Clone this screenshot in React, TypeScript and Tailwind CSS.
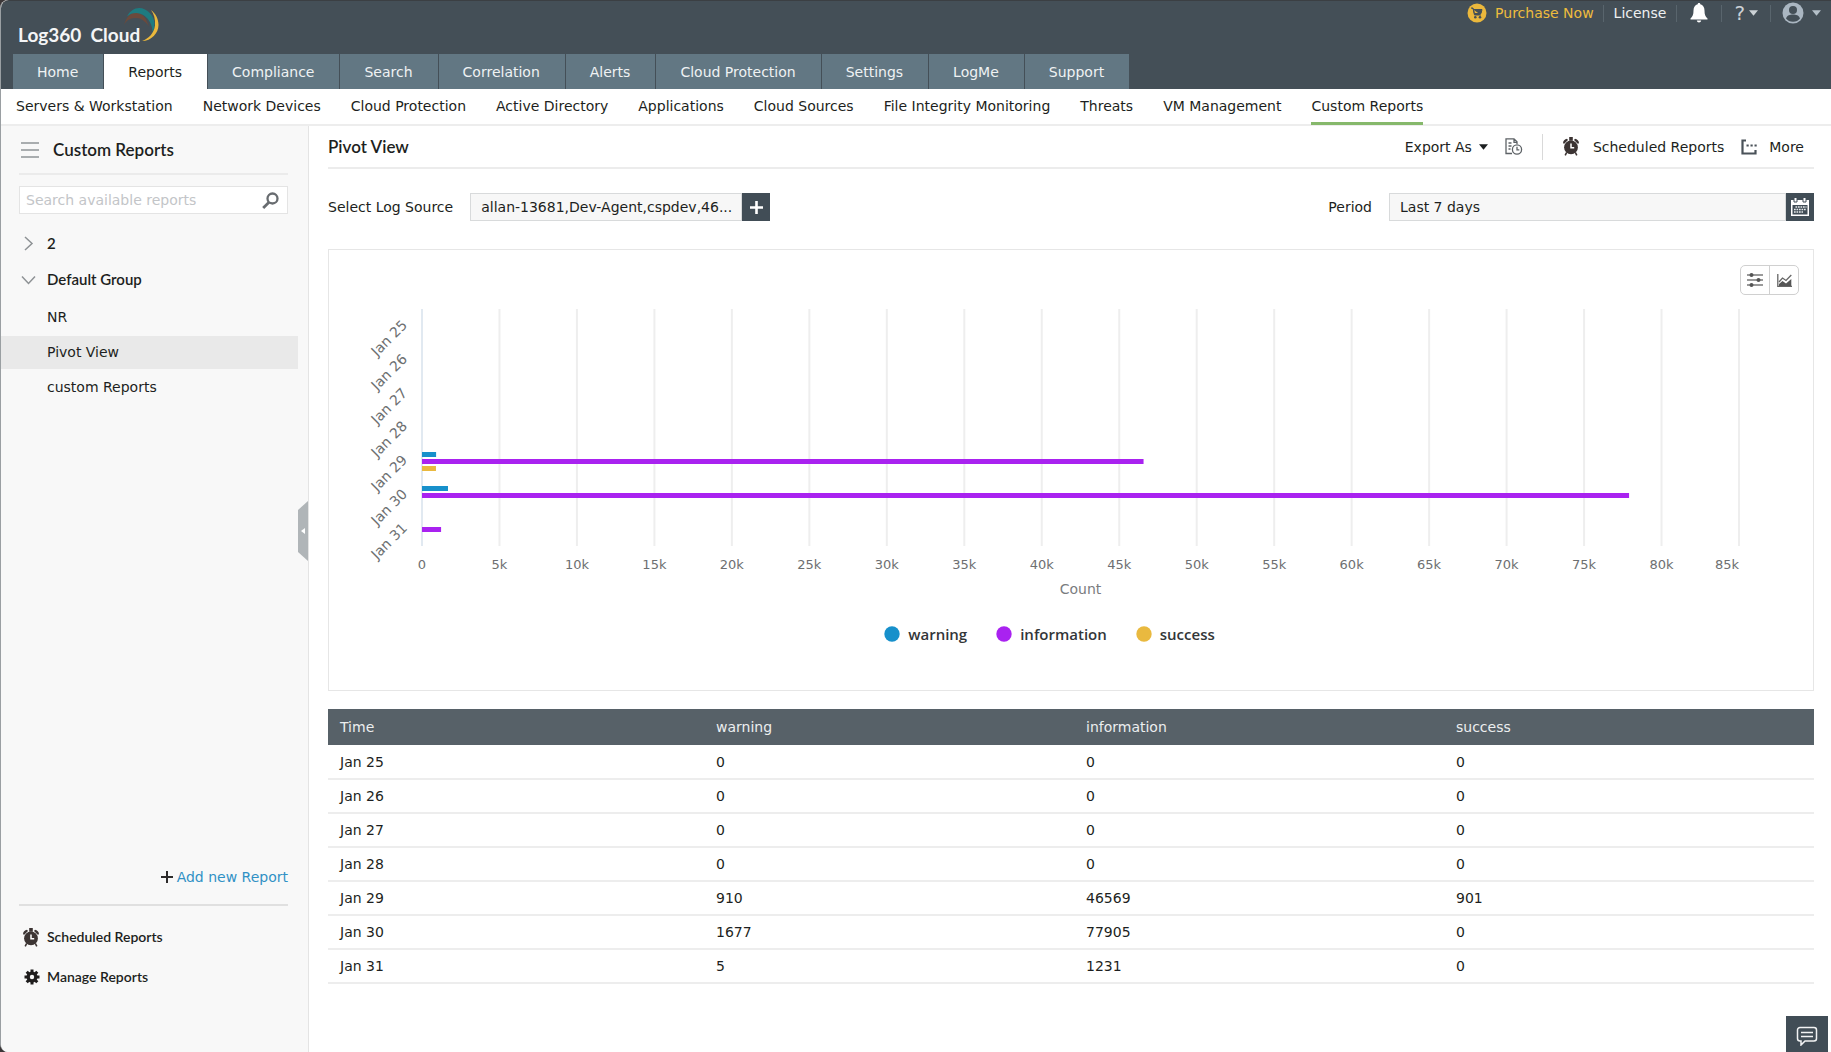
import type { ReactNode } from "react";

const TABS = [
  "Home",
  "Reports",
  "Compliance",
  "Search",
  "Correlation",
  "Alerts",
  "Cloud Protection",
  "Settings",
  "LogMe",
  "Support",
];

const SUB_TABS = [
  "Servers & Workstation",
  "Network Devices",
  "Cloud Protection",
  "Active Directory",
  "Applications",
  "Cloud Sources",
  "File Integrity Monitoring",
  "Threats",
  "VM Management",
  "Custom Reports",
];

const SERIES = [
  { key: "warning", color: "#1790cb" },
  { key: "information", color: "#a922f0" },
  { key: "success", color: "#e9b93f" },
] as const;

const ROWS = [
  { time: "Jan 25", warning: 0, information: 0, success: 0 },
  { time: "Jan 26", warning: 0, information: 0, success: 0 },
  { time: "Jan 27", warning: 0, information: 0, success: 0 },
  { time: "Jan 28", warning: 0, information: 0, success: 0 },
  { time: "Jan 29", warning: 910, information: 46569, success: 901 },
  { time: "Jan 30", warning: 1677, information: 77905, success: 0 },
  { time: "Jan 31", warning: 5, information: 1231, success: 0 },
];

const MAX = 85000;
const TICKS = Array.from({ length: 18 }, (_, i) => i * 5);
const PLOT_HEIGHT = 237;

function Caret({ className }: { className: string }) {
  return (
    <svg viewBox="0 0 10 6" className={className} fill="currentColor" aria-hidden="true">
      <path d="M0 0h10L5 6z" />
    </svg>
  );
}

function AlarmIcon() {
  return (
    <svg viewBox="0 0 18 19" className="h-[19px] w-[18px] shrink-0" aria-hidden="true">
      <path d="M1 6.2C1 4 2.800 2 5 1.800L6 3 2.200 6.800zM17 6.200C17 4 15.200 2 13 1.800L12 3l3.800 3.800z" fill="#3c3433" />
      <path d="M8 .5h2V3H8zM4.600 15.500l-1.400 2.800M13.400 15.500l1.400 2.800" fill="#3c3433" stroke="#3c3433" strokeWidth="1.600" />
      <circle cx="9" cy="10.400" r="6.900" fill="#3c3433" />
      <path d="M9 6.500v4.200h3.200" fill="none" stroke="#fff" strokeWidth="1.500" />
    </svg>
  );
}

function GearIcon() {
  return (
    <svg viewBox="0 0 16 16" className="h-4 w-4 shrink-0" aria-hidden="true">
      <g stroke="#1f1d1d" strokeWidth="3">
        <path d="M8 .5v15M.5 8h15" />
        <path d="M2.700 2.700l10.600 10.600M13.300 2.700L2.700 13.300" />
      </g>
      <circle cx="8" cy="8" r="5.500" fill="#1f1d1d" />
      <circle cx="8" cy="8" r="2.200" fill="#f8f8f8" />
    </svg>
  );
}

function Logo() {
  return (
    <a href="#" className="relative block w-fit pt-[23px] font-['Lato',sans-serif] text-[19px] leading-[22px] font-bold text-[#f4f5f6]">
      Log360&nbsp; Cloud
      <svg viewBox="0 0 36 36" className="absolute top-[6px] left-[106px] h-9 w-9" aria-hidden="true">
        <path d="M0 18C2 11 6 6 11 5.500c5 0 9 3 11 7l3 7C21 14 17 11 12.500 11 7 11 3 12.500 0 18z" fill="#6b4a3c" />
        <path d="M3 9.500C7 2 14-1 21 2.500c6 3 9.500 9 9.500 14 0 4-.5 6-2 8.500C28.500 18 25 12 20 8.500 15 5 8 5 3 9.500z" fill="#1e7b80" />
        <path d="M27 3c4 3 7.500 8 7.500 15 0 8-7 16-16.500 16 7-2.500 12-8 13-15.500C31.500 12 30 7 27 3z" fill="#eab83c" />
      </svg>
    </a>
  );
}

function Separator() {
  return <span className="h-[17px] w-px bg-[#59656d]" />;
}

function Header() {
  return (
    <header className="flex h-[89px] flex-col rounded-tl-lg border-t border-[#3b3f43] bg-[#444f57]">
      <div className="flex flex-1 items-start justify-between pr-[10px] pl-[17px]">
        <Logo />
        <div className="flex h-6 items-center text-[#eef0f1]">
          <a href="#" className="flex items-center gap-2 pr-[9px] text-[#eebc3d]">
            <svg viewBox="0 0 20 20" className="h-5 w-5" aria-hidden="true">
              <circle cx="10" cy="10" r="9.500" fill="#ebb83c" />
              <path d="M4 5h2l1.500 7h6.500M6.500 6.500H15L14 10.500H7.300z" fill="#444f57" stroke="#444f57" strokeWidth="1" />
              <circle cx="8.300" cy="14.300" r="1.300" fill="#444f57" />
              <circle cx="13" cy="14.300" r="1.300" fill="#444f57" />
            </svg>
            Purchase Now
          </a>
          <Separator />
          <a href="#" className="px-[10px]">License</a>
          <Separator />
          <button type="button" aria-label="Notifications" className="px-[13px]">
            <svg viewBox="0 0 18 20" className="h-5 w-[18px]" fill="#fff" aria-hidden="true">
              <path d="M9 0c.8 0 1.300.5 1.300 1.300C13 2 14.500 4.200 14.500 7.500c0 4 .8 6 3 8v1H.5v-1c2.200-2 3-4 3-8C3.500 4.200 5 2 7.700 1.300 7.700.5 8.200 0 9 0zM6.800 17.500h4.400c-.2 1.300-1.100 2-2.200 2s-2-.7-2.200-2z" />
            </svg>
          </button>
          <Separator />
          <button type="button" aria-label="Help" className="flex items-center gap-1 px-3 text-[#ccd2d6]">
            <span className="text-[20px] leading-6">?</span>
            <Caret className="h-[6px] w-[9px]" />
          </button>
          <Separator />
          <button type="button" aria-label="Account" className="flex items-center gap-2 pl-[11px] text-[#b4bfc8]">
            <svg viewBox="0 0 22 22" className="h-[22px] w-[22px]" aria-hidden="true">
              <circle cx="11" cy="11" r="10.500" fill="#aab6c1" />
              <circle cx="11" cy="8" r="4" fill="#444f57" />
              <path d="M4 16.500c1-3.200 4-4 7-4s6 .8 7 4c-1.500 2-4 3.300-7 3.300s-5.500-1.300-7-3.300z" fill="#444f57" />
            </svg>
            <Caret className="h-[6px] w-[9px]" />
          </button>
        </div>
      </div>
      <nav className="flex h-[35px] gap-px pl-3">
        {TABS.map((tab) => (
          <a
            key={tab}
            href="#"
            className={
              tab === "Reports"
                ? "bg-white pr-[25px] pl-6 leading-[36px]"
                : "bg-[#627783] pr-[25px] pl-6 leading-[36px] text-[#eff2f3]"
            }
          >
            {tab}
          </a>
        ))}
      </nav>
    </header>
  );
}

function SubNav() {
  return (
    <nav className="flex h-[37px] gap-[30px] border-b-2 border-[#ededed] pl-[15px]">
      {SUB_TABS.map((tab) => (
        <a
          key={tab}
          href="#"
          className={
            tab === "Custom Reports"
              ? "h-9 border-b-[3px] border-[#86b86b] leading-[35px] whitespace-nowrap"
              : "leading-[35px] whitespace-nowrap"
          }
        >
          {tab}
        </a>
      ))}
    </nav>
  );
}

function Sidebar() {
  return (
    <aside className="relative flex w-[308px] shrink-0 flex-col border-r border-[#e4e4e4] bg-[#f8f8f8]">
      <div className="mr-5 ml-[18px] flex h-[49px] items-center gap-[14px] border-b-2 border-[#ebebeb]">
        <button type="button" aria-label="Toggle menu" className="ml-[2px] flex flex-col gap-[5px]">
          <span className="h-[2px] w-[18px] bg-[#a9adaf]" />
          <span className="h-[2px] w-[18px] bg-[#a9adaf]" />
          <span className="h-[2px] w-[18px] bg-[#a9adaf]" />
        </button>
        <h2 className="font-['Lato',sans-serif] text-[17px] leading-6 font-semibold">Custom Reports</h2>
      </div>
      <div className="mt-[11px] mr-5 ml-[18px] flex h-7 items-center border border-[#e4e4e4] bg-white pr-2 pl-[6px]">
        <input
          type="search"
          aria-label="Search available reports"
          placeholder="Search available reports"
          className="min-w-0 flex-1 outline-none placeholder:text-[#c3c5c8]"
        />
        <button type="button" aria-label="Search">
          <svg viewBox="0 0 17 17" className="h-[17px] w-[17px]" fill="none" stroke="#686c70" aria-hidden="true">
            <circle cx="10.500" cy="6.500" r="5" strokeWidth="2.300" />
            <path d="M7 10.300L1.200 16" strokeWidth="2.800" />
          </svg>
        </button>
      </div>

      <button type="button" className="mt-[11px] flex h-9 items-center gap-[11px] pl-5 font-['Lato',sans-serif] text-[15px] font-semibold">
        <svg viewBox="0 0 15 15" className="h-[15px] w-[15px]" fill="none" stroke="#8e9295" strokeWidth="1.500" aria-hidden="true">
          <path d="M4 1l7 6.500L4 14" />
        </svg>
        2
      </button>
      <button type="button" className="flex h-9 items-center gap-[11px] pl-5 font-['Lato',sans-serif] text-[15px] font-semibold">
        <svg viewBox="0 0 15 15" className="h-[15px] w-[15px]" fill="none" stroke="#8e9295" strokeWidth="1.500" aria-hidden="true">
          <path d="M1 4.500l6.500 7 6.500-7" />
        </svg>
        Default Group
      </button>
      <ul className="mt-1 mr-[10px]">
        {["NR", "Pivot View", "custom Reports"].map((name) => (
          <li key={name} className="mb-[2px]">
            <a
              href="#"
              className={
                name === "Pivot View"
                  ? "block bg-[#e9e9e9] pl-[46px] leading-[33px]"
                  : "block pl-[46px] leading-[33px]"
              }
            >
              {name}
            </a>
          </li>
        ))}
      </ul>

      <div className="mt-auto mr-5 ml-[18px] border-b-2 border-[#e0e0e0] pb-[17px]">
        <button type="button" className="ml-auto flex items-center gap-1 leading-5 text-[#3191c5]">
          <svg viewBox="0 0 12 12" className="h-3 w-3" stroke="#2d2b2b" strokeWidth="2" aria-hidden="true">
            <path d="M6 0v12M0 6h12" />
          </svg>
          Add new Report
        </button>
      </div>
      <div className="flex flex-col pt-[11px] pb-[55px] pl-[21px] font-['Lato',sans-serif] font-semibold">
        <a href="#" className="flex h-10 items-center gap-[7px]">
          <AlarmIcon />
          Scheduled Reports
        </a>
        <a href="#" className="flex h-10 items-center gap-[7px] pl-[2px]">
          <GearIcon />
          Manage Reports
        </a>
      </div>

      <button type="button" aria-label="Collapse sidebar" className="absolute top-[375px] right-0">
        <svg viewBox="0 0 10 60" className="h-[60px] w-[10px]" aria-hidden="true">
          <path d="M10 0v60L0 51V9z" fill="#b0b5b8" />
          <path d="M7 27v6l-4-3z" fill="#fff" />
        </svg>
      </button>
    </aside>
  );
}

function Toolbar() {
  return (
    <div className="flex h-[43px] items-center border-b-2 border-[#ececec]">
      <h1 className="font-['Lato',sans-serif] text-[17px] leading-6 font-semibold">Pivot View</h1>
      <div className="ml-auto flex items-center pr-[10px]">
        <button type="button" className="flex items-center gap-[7px]">
          Export As
          <Caret className="h-[6px] w-[9px]" />
        </button>
        <button type="button" aria-label="Export history" className="ml-[17px]">
          <svg viewBox="0 0 18 17" className="h-[17px] w-[18px]" fill="none" stroke="#5d6266" strokeWidth="1.300" aria-hidden="true">
            <path d="M7 15.500H1V.8h8l3 3V6M9 .8v3.500h3M3.500 5h3M3.500 8h3M3.500 11h2" />
            <circle cx="12" cy="11.500" r="4.600" />
            <path d="M12 8.800v3h2.300" />
          </svg>
        </button>
        <span className="mx-[19px] h-[26px] w-px bg-[#d9d9d9]" />
        <button type="button" className="flex items-center gap-[13px]">
          <AlarmIcon />
          Scheduled Reports
        </button>
        <button type="button" className="ml-[17px] flex items-center gap-[11px]">
          <svg viewBox="0 0 17 16" className="h-4 w-[17px]" fill="none" stroke="#4a5259" aria-hidden="true">
            <path d="M5 1.500H1.500v13h13V11" strokeWidth="2.200" />
            <path d="M5.500 6.500h11" strokeWidth="2.200" strokeDasharray="2.200 1.800" />
          </svg>
          More
        </button>
      </div>
    </div>
  );
}

function Filters() {
  return (
    <div className="mt-6 flex h-7 items-center">
      <label htmlFor="source">Select Log Source</label>
      <div className="ml-[17px] flex h-7 w-[300px]">
        <input
          id="source"
          readOnly
          value="allan-13681,Dev-Agent,cspdev,46..."
          className="min-w-0 flex-1 border border-[#d8dadb] bg-[#f7f7f7] pl-[10px] outline-none"
        />
        <button type="button" aria-label="Add log source" className="flex w-7 items-center justify-center bg-[#414d56]">
          <svg viewBox="0 0 13 13" className="h-[13px] w-[13px]" stroke="#fff" strokeWidth="2.600" aria-hidden="true">
            <path d="M6.500 0v13M0 6.500h13" />
          </svg>
        </button>
      </div>
      <label htmlFor="period" className="ml-auto">Period</label>
      <div className="ml-[17px] flex h-7 w-[425px]">
        <input
          id="period"
          readOnly
          value="Last 7 days"
          className="min-w-0 flex-1 border border-[#d8dadb] bg-[#f7f7f7] pl-[10px] outline-none"
        />
        <button type="button" aria-label="Pick dates" className="flex w-7 items-center justify-center bg-[#414d56]">
          <svg viewBox="0 0 20 20" className="h-5 w-5" aria-hidden="true">
            <path d="M1 3h18v16H1z" fill="#fff" />
            <path d="M2.500 8h15v9.500h-15z" fill="#414d56" />
            <path d="M4 .5h3V5H4zM13 .5h3V5h-3z" fill="#fff" stroke="#414d56" />
            <path d="M5.500 10h11M4 12.500h12M4 15h9" stroke="#e7eaec" strokeWidth="1.600" strokeDasharray="1.700 .8" />
          </svg>
        </button>
      </div>
    </div>
  );
}

function Chart() {
  const band = PLOT_HEIGHT / ROWS.length;
  return (
    <figure className="mt-[14px] pr-[74px] pl-[93px]">
      <svg
        role="img"
        aria-label="Events per day"
        className="block h-[292px] w-full overflow-visible"
      >
        {TICKS.map((tick) => (
          <line
            key={tick}
            x1={`${(tick * 100000) / MAX}%`}
            x2={`${(tick * 100000) / MAX}%`}
            y1="0"
            y2={PLOT_HEIGHT}
            stroke={tick === 0 ? "#c3d3e3" : "#eeeeee"}
            strokeWidth={tick === 0 ? 1 : 2}
          />
        ))}
        {ROWS.map((row, i) => (
          <g key={row.time}>
            {SERIES.map((s, j) => (
              <rect
                key={s.key}
                y={Math.round(band * (i + 0.5)) + (j - 1) * 7 - 2}
                width={row[s.key] < 100 ? 0 : `${(row[s.key] * 100) / MAX}%`}
                height="5"
                fill={s.color}
              />
            ))}
            <text
              transform={`translate(-14 ${Math.round(band * (i + 0.5))}) rotate(-45)`}
              textAnchor="end"
              fontSize="14"
              fill="#6d6f71"
            >
              {row.time}
            </text>
          </g>
        ))}
        {TICKS.map((tick, i) => (
          <text
            key={tick}
            x={`${(tick * 100000) / MAX}%`}
            y="260"
            textAnchor={i === TICKS.length - 1 ? "end" : "middle"}
            fontSize="13"
            fill="#6d6f71"
          >
            {tick === 0 ? "0" : `${tick}k`}
          </text>
        ))}
        <text x="50%" y="285" textAnchor="middle" fontSize="14" fill="#7a7c7e">
          Count
        </text>
      </svg>
      <figcaption className="mt-[23px] flex justify-center gap-[29px] pr-[62px] font-['Open_Sans',sans-serif] text-[15px] leading-5 font-semibold text-[#333638]">
        {SERIES.map((s) => (
          <span key={s.key} className="flex items-center gap-2">
            <svg viewBox="0 0 16 16" className="h-4 w-4" aria-hidden="true">
              <circle cx="8" cy="8" r="7.700" fill={s.color} />
            </svg>
            {s.key}
          </span>
        ))}
      </figcaption>
    </figure>
  );
}

function ChartPanel() {
  return (
    <section className="mt-7 h-[442px] border border-[#e6e6e6] pt-[15px]">
      <div className="mr-[14px] ml-auto flex h-[30px] w-[59px] divide-x divide-[#d0d0d0] rounded-[5px] border border-[#d0d0d0]">
        <button type="button" aria-label="Chart settings" className="flex flex-1 items-center justify-center">
          <svg viewBox="0 0 16 14" className="h-[14px] w-4" stroke="#7a7a7a" strokeWidth="1.300" aria-hidden="true">
            <path d="M0 2h16M0 7h16M0 12h16" />
            <g fill="#555" stroke="none">
              <circle cx="4.500" cy="2" r="2" />
              <circle cx="11.500" cy="7" r="2" />
              <circle cx="4.500" cy="12" r="2" />
            </g>
          </svg>
        </button>
        <button type="button" aria-label="Chart type" className="flex flex-1 items-center justify-center">
          <svg viewBox="0 0 15 13" className="h-[13px] w-[15px]" fill="none" stroke="#666" strokeWidth="1.300" aria-hidden="true">
            <path d="M.8 0v12.300H15" />
            <path d="M2 8l3.500-4L9 6.500 14.300 1" />
            <path d="M2 12V10l3.500-3L9 9.500 14.300 5v7z" fill="#555" stroke="none" />
          </svg>
        </button>
      </div>
      <Chart />
    </section>
  );
}

function Cell({ children }: { children: ReactNode }) {
  return <td className="border-b-2 border-[#ededed] px-3">{children}</td>;
}

function DataTable() {
  return (
    <table className="mt-[18px] w-full table-fixed text-left">
      <thead className="bg-[#576168] text-[#eceeef]">
        <tr className="h-9">
          <th className="w-[376px] px-3 font-normal">Time</th>
          {SERIES.map((s) => (
            <th key={s.key} className="px-3 font-normal">
              {s.key}
            </th>
          ))}
        </tr>
      </thead>
      <tbody>
        {ROWS.map((row) => (
          <tr key={row.time} className="h-[34px]">
            <Cell>{row.time}</Cell>
            <Cell>{row.warning}</Cell>
            <Cell>{row.information}</Cell>
            <Cell>{row.success}</Cell>
          </tr>
        ))}
      </tbody>
    </table>
  );
}

export default function App() {
  return (
    <div className="bg-[#3b3637]">
      <div className="flex min-h-screen flex-col overflow-hidden rounded-tl-lg rounded-bl-lg border-l border-[#9a9fa2] bg-white font-['DejaVu_Sans',sans-serif] text-[14px] leading-5 text-[#1d1f21]">
        <Header />
        <SubNav />
        <div className="flex flex-1">
          <Sidebar />
          <main className="min-w-0 flex-1 pr-[17px] pb-10 pl-[19px]">
            <Toolbar />
            <Filters />
            <ChartPanel />
            <DataTable />
          </main>
        </div>
        <button
          type="button"
          aria-label="Chat"
          className="fixed right-[3px] bottom-0 flex h-9 w-[42px] items-center justify-center bg-[#414d56] pt-1"
        >
          <svg viewBox="0 0 22 20" className="h-5 w-[22px]" fill="none" stroke="#f2f3f4" aria-hidden="true">
            <path d="M4 1.500h14a2.500 2.500 0 012.500 2.500v8.500A2.500 2.500 0 0118 15H9l-4 4v-4H4a2.500 2.500 0 01-2.500-2.500V4A2.500 2.500 0 014 1.500z" strokeWidth="1.500" />
            <path d="M5 6.500h12M5 10.500h12" strokeWidth="1.600" />
          </svg>
        </button>
      </div>
    </div>
  );
}
